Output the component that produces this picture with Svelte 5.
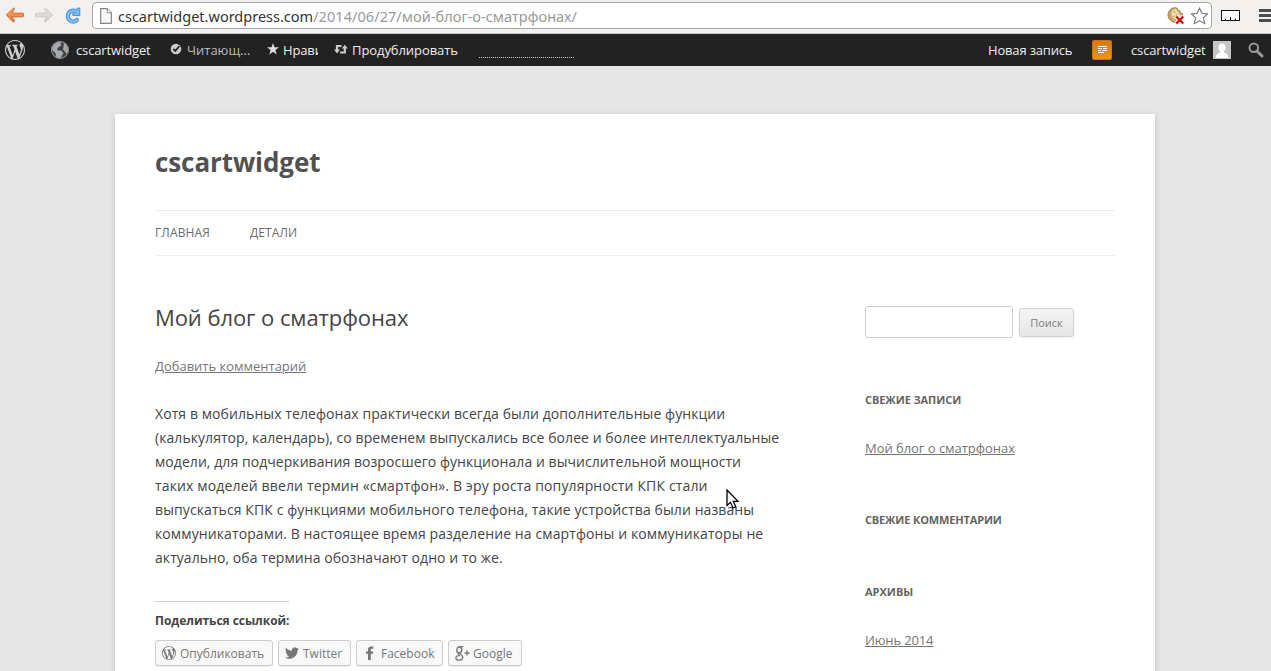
<script>
  const wp = 'M20 10c0-5.51-4.49-10-10-10C4.48 0 0 4.49 0 10c0 5.52 4.48 10 10 10 5.51 0 10-4.48 10-10zM7.78 15.37L4.37 6.22c.55-.02 1.17-.08 1.17-.08.5-.06.44-1.13-.06-1.11 0 0-1.45.11-2.37.11-.18 0-.37 0-.58-.01C4.12 2.69 6.87 1.11 10 1.11c2.33 0 4.45.87 6.05 2.34-.68-.11-1.65.39-1.65 1.58 0 .74.45 1.36.9 2.1.35.61.55 1.36.55 2.46 0 1.49-1.4 5-1.4 5l-3.03-8.37c.54-.02.82-.17.82-.17.5-.05.44-1.25-.06-1.22 0 0-1.44.12-2.38.12-.87 0-2.33-.12-2.33-.12-.5-.03-.56 1.2-.06 1.22l.92.08 1.26 3.41zM17.41 10c.24-.64.74-1.87.43-4.25.7 1.29 1.05 2.71 1.05 4.25 0 3.29-1.73 6.24-4.4 7.78.97-2.59 1.94-5.2 2.92-7.78zM6.1 18.09C3.12 16.65 1.11 13.53 1.11 10c0-1.3.23-2.48.72-3.59C3.25 10.3 4.67 14.2 6.1 18.09zm4.03-6.63l2.58 6.98c-.86.29-1.76.45-2.71.45-.79 0-1.57-.11-2.29-.33.81-2.38 1.62-4.74 2.42-7.1z';
  const bird = 'M23.953 4.57a10 10 0 01-2.825.775 4.958 4.958 0 002.163-2.723c-.951.555-2.005.959-3.127 1.184a4.92 4.92 0 00-8.384 4.482C7.69 8.095 4.067 6.13 1.64 3.162a4.822 4.822 0 00-.666 2.475c0 1.71.87 3.213 2.188 4.096a4.904 4.904 0 01-2.228-.616v.06a4.923 4.923 0 003.946 4.827 4.996 4.996 0 01-2.212.085 4.936 4.936 0 004.604 3.417 9.867 9.867 0 01-6.102 2.105c-.39 0-.779-.023-1.17-.067a13.995 13.995 0 007.557 2.209c9.053 0 13.998-7.496 13.998-13.985 0-.21 0-.42-.015-.63A9.935 9.935 0 0024 4.59z';
  const lines = [
    ['Хотя в мобильных телефонах практически всегда были дополнительные функции', 0.08],
    ['(калькулятор, календарь), со временем выпускались все более и более интеллектуальные', 0.06],
    ['модели, для подчеркивания возросшего функционала и вычислительной мощности', 0.06],
    ['таких моделей ввели термин «смартфон». В эру роста популярности КПК стали', 0.15],
    ['выпускаться КПК с функциями мобильного телефона, такие устройства были названы', 0.1],
    ['коммуникаторами. В настоящее время разделение на смартфоны и коммуникаторы не', 0.11],
    ['актуально, оба термина обозначают одно и то же.', 0.06]
  ];
</script>

<div class="screen">
  <header class="chrome">
    <svg class="back" width="20" height="16" viewBox="0 0 20 16">
      <defs>
        <linearGradient id="or" x1="0" y1="0" x2="0" y2="1"><stop offset="0" stop-color="#f9b27a" /><stop offset="1" stop-color="#e9702c" /></linearGradient>
        <linearGradient id="gr" x1="0" y1="0" x2="0" y2="1"><stop offset="0" stop-color="#e9e7e5" /><stop offset="1" stop-color="#d3d0cd" /></linearGradient>
      </defs>
      <path d="M1.3 8 8.3 1.2Q9.6.9 9.5 2.2L6.8 6.2H17.6Q18.5 6.2 18.5 7V9Q18.5 9.800 17.6 9.800H6.8L9.5 13.6Q9.6 15 8.3 14.8Z" fill="url(#or)" stroke="#d0662c" stroke-width="1" stroke-linejoin="round" />
    </svg>
    <svg class="fwd" width="20" height="16" viewBox="0 0 20 16">
      <path d="M18.7 8 11.7 1.2Q10.4.9 10.5 2.2L13.2 6.2H2.4Q1.5 6.2 1.5 7V9Q1.5 9.800 2.4 9.800H13.2L10.5 13.6Q10.4 15 11.7 14.8Z" fill="url(#gr)" stroke="#cbc8c5" stroke-width="1" stroke-linejoin="round" />
    </svg>
    <svg class="reload" width="18" height="18" viewBox="0 0 18 18">
      <path d="M11.800 4.400A5.400 5.400 0 1 0 12.800 13.200" fill="none" stroke="#4a90d4" stroke-width="4.400" stroke-linecap="round" />
      <path d="M15.800 1V8.600H8.800V6.500L12 5.500 13.500 1Z" fill="#7fbaf0" stroke="#4a90d4" stroke-linejoin="round" />
      <path d="M11.800 4.400A5.400 5.400 0 1 0 12.800 13.200" fill="none" stroke="#7fbaf0" stroke-width="2.600" stroke-linecap="round" />
    </svg>
    <div class="omnibox">
      <svg class="page" width="12" height="16" viewBox="0 0 12 16">
        <path d="M.7.7H7.3L11.3 4.8V15.3H.7Z" fill="#f7f7f7" stroke="#858585" stroke-width="1.2" />
        <path d="M7.3.7V4.8H11.3" fill="#fff" stroke="#858585" />
      </svg>
      <span class="url"><span class="host">cscartwidget.wordpress.com</span><span class="path">/2014/06/27/мой-блог-о-сматрфонах/</span></span>
      <svg class="cookie" width="18" height="18" viewBox="0 0 18 18">
        <path d="M8 .6A7.4 7.4 0 1 0 10 15.2L15 9.5 15.500 6.500 13 6.500 13.200 4 11 3.500 10.300 1.200Z" fill="#c9a468" stroke="#9a7338" stroke-width=".8" />
        <path d="M9 1.500A6 6 0 0 0 4.500 8Q5.500 12 8.500 12.500L14 8.500 14 7.500 12 7.200 12 5 10.500 4.500Z" fill="#efdcb0" />
        <circle cx="7.500" cy="5" r=".8" fill="#b08a4a" /><circle cx="9.500" cy="8" r=".8" fill="#b08a4a" /><circle cx="6.500" cy="9.500" r=".7" fill="#b08a4a" />
        <path d="M9.200 9.500 16.200 16.500M16.200 9.500 9.200 16.500" stroke="#fff" stroke-width="4" />
        <path d="M9.200 9.500 16.200 16.500M16.200 9.500 9.200 16.500" stroke="#d40b0b" stroke-width="2.3" />
      </svg>
      <svg class="fav" width="19" height="18" viewBox="0 0 19 18">
        <path d="M9.500.9 11.900 6.400 17.800 6.800 13.300 10.900 14.900 16.800 9.500 13.700 4.100 16.800 5.700 10.900 1.200 6.800 7.100 6.400Z" fill="#fff" stroke="#808080" stroke-width="1.2" stroke-linejoin="round" />
      </svg>
    </div>
    <svg class="ruler" width="20" height="12" viewBox="0 0 20 12">
      <rect x=".5" y="1.500" width="18" height="10" fill="#fafafa" stroke="#111" />
      <path d="M4.500 11V9.500M9.500 11V8M14.500 11V9.500" stroke="#111" />
    </svg>
    <svg class="menu" width="12" height="14" viewBox="0 0 12 14">
      <path d="M0 1.500H12M0 6.500H12M0 11.500H12" stroke="#4d4d4d" stroke-width="3" />
    </svg>
  </header>

  <nav class="adminbar">
    <svg class="wplogo" width="20" height="20" viewBox="0 0 20 20" fill="#ccc"><path d={wp} /></svg>
    <svg class="globe" width="18" height="18" viewBox="0 0 18 18">
      <circle cx="9" cy="9" r="9" fill="#3d4248" />
      <path d="M1.500 4.500Q4 1 8.500 .3L10.500 1.500 9.500 3 10.500 4.500 7.500 6 6 8 7 9.500 10 9.500 12.500 12 11 14.500 9.500 17.500Q6 17.500 4.500 16.500L5 13 2.500 10 .2 9Q0 6.500 1.500 4.500Z" fill="#aaa" />
      <path d="M13 1.500Q17.500 4 17.800 9L16.500 13 14.500 11.500 12 8.500 12.500 5.500Z" fill="#aaa" />
      <circle cx="9" cy="9" r="8.400" fill="none" stroke="#888" stroke-width="1.200" />
    </svg>
    <span class="t site">cscartwidget</span>
    <svg class="check" width="12" height="12" viewBox="0 0 12 12">
      <circle cx="6" cy="6" r="5.300" fill="#ccc" /><path d="M3.300 5.800 5.300 7.900 9.500 3" fill="none" stroke="#222" stroke-width="1.700" />
    </svg>
    <span class="t reading">Читающ...</span>
    <svg class="star" width="12" height="12" viewBox="0 0 12 12"><path d="M6 0 7.500 4.200H12L8.400 6.900 9.700 11.500 6 8.700 2.300 11.500 3.600 6.900 0 4.200H4.500Z" fill="#ddd" /></svg>
    <span class="t like">Нрави</span>
    <svg class="reblog" width="14" height="11" viewBox="0 0 14 11">
      <path d="M7.500 2H3V6.500M6 8.500H10.800V4" fill="none" stroke="#ccc" stroke-width="2.200" />
      <path d="M0 5.500H6L3 9.500ZM7.800 4.500H13.800L10.800 .8Z" fill="#ccc" />
    </svg>
    <span class="t dup">Продублировать</span>
    <span class="dots"></span>
    <span class="t newpost">Новая запись</span>
    <span class="notes">
      <svg width="9" height="8" viewBox="0 0 9 8" shape-rendering="crispEdges"><path d="M0 .5H9M0 2.500H4M5 2.500H9M0 4.500H3M4 4.500H9M0 6.500H6" stroke="#fff" stroke-width="1" /></svg>
    </span>
    <span class="t user">cscartwidget</span>
    <svg class="avatar" width="18" height="18" viewBox="0 0 18 18">
      <rect width="18" height="18" fill="#c5c5c5" />
      <path d="M9 2.500C11.500 2.500 12.800 4.300 12.600 6.500 12.500 8.300 11.700 9.500 11 10.200V11.500Q15 12.500 15.500 17H2.500Q3 12.500 7 11.500V10.200C6.300 9.500 5.500 8.300 5.400 6.500 5.200 4.300 6.500 2.500 9 2.500Z" fill="#fff" />
    </svg>
    <svg class="search" width="16" height="16" viewBox="0 0 16 16"><circle cx="5.800" cy="5.800" r="4.300" fill="none" stroke="#999" stroke-width="2" /><path d="M9 9 14 14" stroke="#999" stroke-width="3" stroke-linecap="round" /></svg>
  </nav>

  <div class="sheet">
    <h1>cscartwidget</h1>
    <div class="mainnav"><span>ГЛАВНАЯ</span><span>ДЕТАЛИ</span></div>
    <div class="columns">
      <main>
        <h2>Мой блог о сматрфонах</h2>
        <a class="reply" href="#respond">Добавить комментарий</a>
        <p>{#each lines as [text, spacing]}<span class="line" style="letter-spacing: {spacing}px">{text}</span>{/each}</p>
        <div class="share">
          <h3>Поделиться ссылкой:</h3>
          <div class="buttons">
            <span class="btn b1"><svg width="14" height="14" viewBox="0 0 20 20"><path d={wp} /></svg>Опубликовать</span>
            <span class="btn b2"><svg width="14" height="14" viewBox="0 0 24 24"><path d={bird} /></svg>Twitter</span>
            <span class="btn b3"><svg width="14" height="14" viewBox="0 0 14 14"><path d="M5 14V7.800H3V5.400H5V3.700Q5 .4 8.300 .4H10.300V2.700H9Q7.800 2.700 7.800 3.800V5.400H10.300L10 7.800H7.800V14Z" /></svg>Facebook</span>
            <span class="btn b4"><svg width="15" height="15" viewBox="0 0 15 15">
              <g fill="none" stroke="#777" stroke-width="1.300"><ellipse cx="4.200" cy="4" rx="2.500" ry="3" /><path d="M4.200 .7H8.300M5.700 1.200Q7 2.200 6.700 4 6.500 5.700 5.200 6.500 4.300 7.300 5.300 8.200 8 9.800 7.700 11.800 7.200 14.200 4.200 14.200 .9 14.200 .9 11.900 1 9.300 5 9.300M3.700 7.100Q2.700 8.300 4 9.300" /><path d="M9.500 7H14.500M12 4.500V9.500" /></g>
            </svg>Google</span>
          </div>
        </div>
      </main>
      <aside>
        <div class="searchform"><span class="field"></span><button>Поиск</button></div>
        <h4 class="posts">СВЕЖИЕ ЗАПИСИ</h4>
        <a href="#post">Мой блог о сматрфонах</a>
        <h4 class="comments">СВЕЖИЕ КОММЕНТАРИИ</h4>
        <h4 class="archive">АРХИВЫ</h4>
        <a href="#june">Июнь 2014</a>
      </aside>
    </div>
  </div>

  <svg class="cursor" width="14" height="21" viewBox="0 0 14 21">
    <path d="M1 1V16.500L4.500 13.300 7 19 9.800 17.800 7.300 12.300H12Z" fill="#fff" stroke="#000" stroke-width="1.300" />
  </svg>
</div>

<style>
  :global(body) { overflow: hidden; }
  .screen { position: relative; width: 1271px; height: 671px; overflow: hidden; background: #e6e6e6; font-family: "Open Sans", sans-serif; color: #444; }
  svg { display: block; flex: none; }
  .chrome { display: flex; align-items: flex-start; height: 34px; box-sizing: border-box; background: #f2f1f0; border-bottom: 1px solid #c5c8c4; }
  .back { margin: 7px 0 0 5px; }
  .fwd { margin: 7px 0 0 9px; }
  .reload { margin: 7px 0 0 10px; }
  .omnibox { display: flex; flex: none; box-sizing: border-box; width: 1120px; height: 27px; margin: 2px 0 0 10px; border: 1px solid #a9a5a0; border-radius: 4px; background: #fff; }
  .page { margin: 5px 0 0 7px; }
  .url { margin-left: 6px; font: 14.5px/26px "Noto Sans", sans-serif; white-space: nowrap; width: 1049px; }
  .host { color: #333; }
  .path { color: #999; letter-spacing: .06px; }
  .cookie { margin-top: 4px; }
  .fav { margin: 4px 0 0 5px; }
  .ruler { margin: 9px 0 0 9px; }
  .menu { margin: 9px 0 0 18px; }

  .adminbar { display: flex; align-items: flex-start; height: 32px; background: #222; }
  .t { flex: none; font-size: 13px; line-height: 32px; color: #eee; white-space: nowrap; overflow: hidden; letter-spacing: -.13px; }
  .wplogo { margin: 6px 0 0 5px; }
  .globe { margin: 7px 0 0 26px; }
  .site { width: 95px; margin-left: 7px; }
  .check { margin-top: 9px; margin-left: -1px; }
  .reading { width: 80px; margin-left: 5px; color: #bbb; letter-spacing: 0; }
  .star { margin-top: 9px; }
  .like { width: 35px; margin-left: 4px; }
  .reblog { margin: 10px 0 0 16px; }
  .dup { width: 127px; margin-left: 4px; letter-spacing: -.08px; }
  .dots { width: 95px; height: 23px; border-bottom: 1px dotted #ccc; }
  .newpost { width: 104px; margin-left: 414px; letter-spacing: -.17px; }
  .notes { flex: none; display: flex; align-items: center; justify-content: center; width: 20px; height: 20px; margin-top: 6px; border-radius: 3px; background: linear-gradient(#d9780b, #ed941f); box-shadow: inset 0 0 0 1px #cf7008; }
  .user { width: 82px; margin-left: 19px; }
  .avatar { margin-top: 7px; }
  .search { margin: 8px 0 0 17px; }

  .sheet { width: 960px; height: 600px; margin: 48px 0 0 115px; padding: 0 40px; background: #fff; box-shadow: 0 2px 6px rgba(100, 100, 100, .3); }
  h1 { margin: 0; padding-top: 24px; height: 72px; font-size: 26px; line-height: 48px; color: #515151; letter-spacing: -.09px; }
  .mainnav { display: flex; gap: 40px; height: 44px; border: solid #ededed; border-width: 1px 0; font-size: 12px; line-height: 44px; color: #6a6a6a; letter-spacing: .12px; }
  .columns { display: flex; }
  main { width: 710px; padding-top: 47px; }
  h2 { margin: 0; font-size: 22px; line-height: 28px; font-weight: 400; letter-spacing: -.08px; }
  a { display: block; font-size: 13px; line-height: 24px; color: #757575; text-decoration: underline; width: max-content; letter-spacing: -.04px; }
  .reply { margin-top: 23px; letter-spacing: -.01px; }
  p { margin: 24px 0 0; font-size: 14px; line-height: 24px; }
  .line { display: block; white-space: nowrap; }
  .share { margin-top: 31px; }
  h3 { margin: 0; width: max-content; border-top: 1px solid #ccc; padding-top: 8px; font-size: 12px; line-height: 22px; letter-spacing: -.05px; }
  .buttons { display: flex; gap: 5px; margin-top: 8px; }
  .btn { display: flex; align-items: center; box-sizing: border-box; height: 26px; padding: 0 0 0 6px; gap: 4px; border: 1px solid #ccc; border-radius: 3px; background: #f8f8f8; box-shadow: 0 1px 0 rgba(0, 0, 0, .08); font-size: 12px; color: #777; fill: #777; white-space: nowrap; }
  .b1 { width: 118px; }
  .b2 { width: 73px; }
  .b3 { width: 87px; }
  .b4 { width: 74px; gap: 3px; }
  aside { padding-top: 50px; }
  aside a:last-child { letter-spacing: -.15px; }
  .searchform { display: flex; gap: 6px; align-items: flex-start; }
  .field { width: 146px; height: 30px; border: 1px solid #ccc; border-radius: 3px; }
  button { width: 55px; height: 29px; margin-top: 2px; padding: 0; border: 1px solid #d2d2d2; border-radius: 3px; background: linear-gradient(#f4f4f4, #e6e6e6); box-shadow: 0 1px 2px rgba(64, 64, 64, .1); font: 11px "Open Sans", sans-serif; color: #7c7c7c; }
  h4 { margin: 0; font-size: 11px; line-height: 24px; color: #636363; }
  .posts { margin: 50px 0 24px; letter-spacing: -.07px; }
  .comments { margin-top: 48px; letter-spacing: -.15px; }
  .archive { margin: 48px 0 24px; }
  .cursor { position: absolute; left: 726px; top: 489px; }
</style>
